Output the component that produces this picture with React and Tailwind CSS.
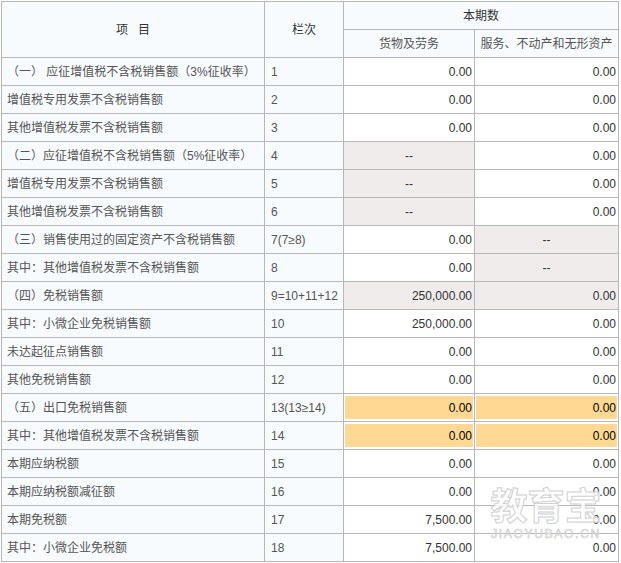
const rows = [
  { label: "（一） 应征增值税不含税销售额（3%征收率）", no: "1", a: "0.00", b: "0.00" },
  { label: "增值税专用发票不含税销售额", no: "2", a: "0.00", b: "0.00" },
  { label: "其他增值税发票不含税销售额", no: "3", a: "0.00", b: "0.00" },
  { label: "（二）应征增值税不含税销售额（5%征收率）", no: "4", a: "--", b: "0.00", aGray: true },
  { label: "增值税专用发票不含税销售额", no: "5", a: "--", b: "0.00", aGray: true },
  { label: "其他增值税发票不含税销售额", no: "6", a: "--", b: "0.00", aGray: true },
  { label: "（三）销售使用过的固定资产不含税销售额", no: "7(7≥8)", a: "0.00", b: "--", bGray: true },
  { label: "其中：其他增值税发票不含税销售额", no: "8", a: "0.00", b: "--", bGray: true },
  { label: "（四）免税销售额", no: "9=10+11+12", a: "250,000.00", b: "0.00", aGray: true, bGray: true },
  { label: "其中：小微企业免税销售额", no: "10", a: "250,000.00", b: "0.00" },
  { label: "未达起征点销售额", no: "11", a: "0.00", b: "0.00" },
  { label: "其他免税销售额", no: "12", a: "0.00", b: "0.00" },
  { label: "（五）出口免税销售额", no: "13(13≥14)", a: "0.00", b: "0.00", orange: true },
  { label: "其中：其他增值税发票不含税销售额", no: "14", a: "0.00", b: "0.00", orange: true },
  { label: "本期应纳税额", no: "15", a: "0.00", b: "0.00" },
  { label: "本期应纳税额减征额", no: "16", a: "0.00", b: "0.00" },
  { label: "本期免税额", no: "17", a: "7,500.00", b: "0.00" },
  { label: "其中：小微企业免税额", no: "18", a: "7,500.00", b: "0.00" },
];

const cell = "border border-[#b8b8b8] p-0 h-[28px]";

const ValueCell = ({ value, gray, orange }) => {
  if (orange) {
    return (
      <td className={cell + " px-[1px]"}>
        <div className="h-[23px] bg-[#ffd993] text-right leading-[25px] text-black pr-[1px]">{value}</div>
      </td>
    );
  }
  if (value === "--") {
    return <td className={cell + " bg-[#f0ecec] text-center text-[#333]"}>{value}</td>;
  }
  return (
    <td className={cell + " text-right pr-[2px] text-[#333] " + (gray ? "bg-[#f0ecec]" : "bg-white")}>{value}</td>
  );
};

export default function App() {
  return (
    <div className="relative w-[621px] h-[563px] overflow-hidden bg-white pl-[1px] pt-[1px] font-['Liberation_Sans','Noto_Sans_CJK_SC',sans-serif] text-[12px] text-[#555]">
      <table className="table-fixed border-collapse w-[618px]">
        <colgroup>
          <col className="w-[263px]" />
          <col className="w-[79px]" />
          <col className="w-[131px]" />
          <col className="w-[144px]" />
        </colgroup>
        <thead>
          <tr>
            <th rowSpan={2} className={cell + " bg-[#f7fbfd] font-normal text-center text-[#333] whitespace-pre"}>项   目</th>
            <th rowSpan={2} className={cell + " bg-[#f7fbfd] font-normal text-center text-[#333]"}>栏次</th>
            <th colSpan={2} className={cell + " bg-[#f7fbfd] font-normal text-center text-[#333]"}>本期数</th>
          </tr>
          <tr>
            <th className={cell + " bg-[#f7fbfd] font-normal text-center"}>货物及劳务</th>
            <th className={cell + " bg-[#f7fbfd] font-normal text-center"}>服务、不动产和无形资产</th>
          </tr>
        </thead>
        <tbody>
          {rows.map((row, i) => (
            <tr key={i}>
              <td className={cell + " bg-[#f7fbfd] whitespace-nowrap pl-[5px]"}>{row.label}</td>
              <td className={cell + " bg-[#f7fbfd] pl-[6px]"}>{row.no}</td>
              <ValueCell value={row.a} gray={row.aGray} orange={row.orange} />
              <ValueCell value={row.b} gray={row.bGray} orange={row.orange} />
            </tr>
          ))}
        </tbody>
      </table>
      <div className="absolute left-[489px] top-[489px] w-[114px] flex flex-col items-center pointer-events-none">
        <div className="text-[37px] leading-[38px] font-bold text-white/80 [-webkit-text-stroke:1px_#d0d0d0] whitespace-nowrap">教育宝</div>
        <div className="text-[12px] leading-[14px] text-white/80 [-webkit-text-stroke:0.6px_#c8c8c8] tracking-[1.7px] whitespace-nowrap">JIAOYUBAO.CN</div>
      </div>
    </div>
  );
}
